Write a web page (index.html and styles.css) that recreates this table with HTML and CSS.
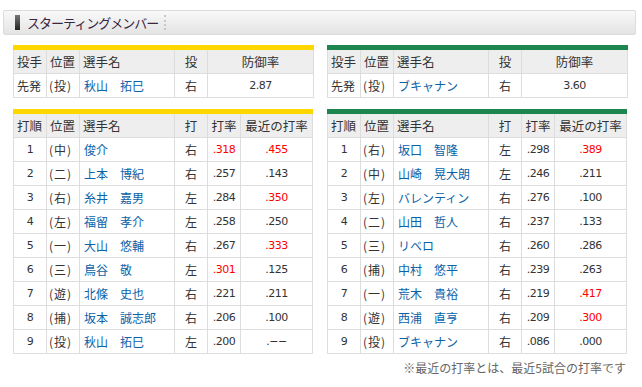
FILE: index.html
```html
<!DOCTYPE html>
<html lang="ja">
<head>
<meta charset="utf-8">
<link rel="stylesheet" href="styles.css">
</head>
<body>
<div class="titlebar">
  <span class="titlemark"></span>
  <span class="titletext">スターティングメンバー</span>
  <span class="titlesep"></span>
</div>
<div class="teams">
  <div class="team yellow">
    <table class="tbl pitcher">
      <colgroup><col class="c1"><col class="c2"><col class="c3"><col class="c4"><col class="c5w"></colgroup>
      <tr><th class="l">投手</th><th class="l">位置</th><th class="l">選手名</th><th>投</th><th>防御率</th></tr>
      <tr><td class="l">先発</td><td class="l pos">(投)</td><td class="l name">秋山　拓巳</td><td>右</td><td class="num">2.87</td></tr>
    </table>
    <table class="tbl lineup">
      <colgroup><col class="c1"><col class="c2"><col class="c3"><col class="c4"><col class="c5"><col class="c6"></colgroup>
      <tr><th class="l">打順</th><th class="l">位置</th><th class="l">選手名</th><th>打</th><th>打率</th><th>最近の打率</th></tr>
      <tr><td class="num">1</td><td class="l pos">(中)</td><td class="l name">俊介</td><td>右</td><td class="num red">.318</td><td class="num red">.455</td></tr>
      <tr><td class="num">2</td><td class="l pos">(二)</td><td class="l name">上本　博紀</td><td>右</td><td class="num">.257</td><td class="num">.143</td></tr>
      <tr><td class="num">3</td><td class="l pos">(右)</td><td class="l name">糸井　嘉男</td><td>左</td><td class="num">.284</td><td class="num red">.350</td></tr>
      <tr><td class="num">4</td><td class="l pos">(左)</td><td class="l name">福留　孝介</td><td>左</td><td class="num">.258</td><td class="num">.250</td></tr>
      <tr><td class="num">5</td><td class="l pos">(一)</td><td class="l name">大山　悠輔</td><td>右</td><td class="num">.267</td><td class="num red">.333</td></tr>
      <tr><td class="num">6</td><td class="l pos">(三)</td><td class="l name">鳥谷　敬</td><td>左</td><td class="num red">.301</td><td class="num">.125</td></tr>
      <tr><td class="num">7</td><td class="l pos">(遊)</td><td class="l name">北條　史也</td><td>右</td><td class="num">.221</td><td class="num">.211</td></tr>
      <tr><td class="num">8</td><td class="l pos">(捕)</td><td class="l name">坂本　誠志郎</td><td>右</td><td class="num">.206</td><td class="num">.100</td></tr>
      <tr><td class="num">9</td><td class="l pos">(投)</td><td class="l name">秋山　拓巳</td><td>左</td><td class="num">.200</td><td class="num">.−−</td></tr>
    </table>
  </div>
  <div class="team green">
    <table class="tbl pitcher">
      <colgroup><col class="c1"><col class="c2"><col class="c3"><col class="c4"><col class="c5w"></colgroup>
      <tr><th class="l">投手</th><th class="l">位置</th><th class="l">選手名</th><th>投</th><th>防御率</th></tr>
      <tr><td class="l">先発</td><td class="l pos">(投)</td><td class="l name">ブキャナン</td><td>右</td><td class="num">3.60</td></tr>
    </table>
    <table class="tbl lineup">
      <colgroup><col class="c1"><col class="c2"><col class="c3"><col class="c4"><col class="c5"><col class="c6"></colgroup>
      <tr><th class="l">打順</th><th class="l">位置</th><th class="l">選手名</th><th>打</th><th>打率</th><th>最近の打率</th></tr>
      <tr><td class="num">1</td><td class="l pos">(右)</td><td class="l name">坂口　智隆</td><td>左</td><td class="num">.298</td><td class="num red">.389</td></tr>
      <tr><td class="num">2</td><td class="l pos">(中)</td><td class="l name">山崎　晃大朗</td><td>左</td><td class="num">.246</td><td class="num">.211</td></tr>
      <tr><td class="num">3</td><td class="l pos">(左)</td><td class="l name">バレンティン</td><td>右</td><td class="num">.276</td><td class="num">.100</td></tr>
      <tr><td class="num">4</td><td class="l pos">(二)</td><td class="l name">山田　哲人</td><td>右</td><td class="num">.237</td><td class="num">.133</td></tr>
      <tr><td class="num">5</td><td class="l pos">(三)</td><td class="l name">リベロ</td><td>右</td><td class="num">.260</td><td class="num">.286</td></tr>
      <tr><td class="num">6</td><td class="l pos">(捕)</td><td class="l name">中村　悠平</td><td>右</td><td class="num">.239</td><td class="num">.263</td></tr>
      <tr><td class="num">7</td><td class="l pos">(一)</td><td class="l name">荒木　貴裕</td><td>右</td><td class="num">.219</td><td class="num red">.417</td></tr>
      <tr><td class="num">8</td><td class="l pos">(遊)</td><td class="l name">西浦　直亨</td><td>右</td><td class="num">.209</td><td class="num red">.300</td></tr>
      <tr><td class="num">9</td><td class="l pos">(投)</td><td class="l name">ブキャナン</td><td>右</td><td class="num">.086</td><td class="num">.000</td></tr>
    </table>
    <p class="note">※最近の打率とは、最近5試合の打率です</p>
  </div>
</div>
</body>
</html>
```

FILE: styles.css
```css
html, body {
  margin: 0;
  padding: 0;
  background: #fff;
}
body {
  font-family: "Noto Sans CJK JP", "DejaVu Sans", sans-serif;
  font-size: 12px;
  color: #333;
}
.titlebar {
  margin: 10px 6px 0 3px;
  height: 23px;
  border: 1px solid #dcdcdc;
  border-radius: 2px;
  background: linear-gradient(#f9f9f9, #ececec 60%, #e4e4e4);
  display: flex;
  align-items: center;
}
.titlemark {
  width: 5px;
  height: 15px;
  margin-left: 11px;
  background: linear-gradient(#777, #222);
}
.titletext {
  margin-left: 7px;
  font-size: 13px;
  letter-spacing: -1px;
  color: #3a2640;
  line-height: 16px;
}
.titlesep {
  margin-left: 6px;
  width: 0;
  height: 15px;
  border-left: 2px dotted #c8c8c8;
}
.teams {
  display: flex;
  gap: 14px;
  margin: 10px 0 0 13px;
}
.team {
  width: 300px;
}
.tbl {
  width: 300px;
  border-collapse: collapse;
  table-layout: fixed;
  border-top: 5px solid;
}
.yellow .tbl { border-top-color: #ffd700; }
.green .tbl { border-top-color: #1c8550; }
.pitcher { margin-bottom: 11px; }
.c1, .c2, .c4, .c5 { width: 33px; }
.c3 { width: 95px; }
.c6 { width: 72px; }
.c5w { width: 106px; }
.tbl th, .tbl td {
  border: 1px solid #dddddd;
  height: 23px;
  padding: 0;
  text-align: center;
  font-weight: normal;
  line-height: 14px;
  white-space: nowrap;
  color: #333;
}
.tbl th {
  background: #eeeeee;
  font-size: 12.5px;
}
.tbl .l {
  text-align: left;
  padding-left: 3px;
}
.tbl .pos {
  padding-left: 2px;
  letter-spacing: 1px;
}
.tbl td.name {
  color: #0a62a8;
  padding-left: 4px;
}
.tbl td.num {
  font-family: "DejaVu Sans", sans-serif;
  font-size: 11px;
  letter-spacing: -0.5px;
}
.tbl td.red { color: #ff0000; }
.note {
  margin: 5px 1px 0 0;
  text-align: right;
  color: #666;
  font-size: 12px;
}
```
